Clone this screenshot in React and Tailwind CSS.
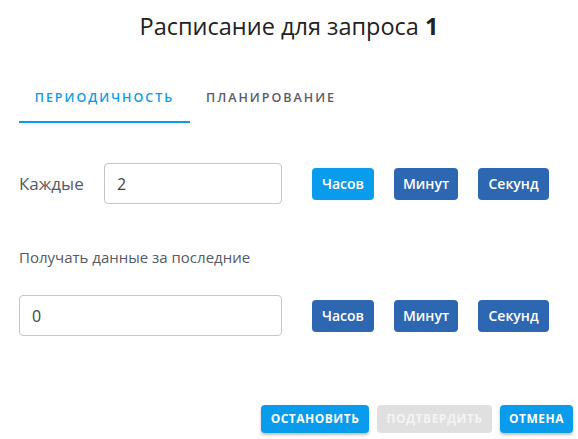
import React, { useState } from 'react';

const units = [
  { label: 'Часов', width: 'w-[62px]' },
  { label: 'Минут', width: 'w-[64px]' },
  { label: 'Секунд', width: 'w-[71px]' }
];

const UnitButtons = ({ value, onChange }) => (
  <div className="flex items-center gap-[20px]">
    {units.map((unit) => (
      <button
        key={unit.label}
        onClick={() => onChange(unit.label)}
        className={`${unit.width} h-[32px] rounded-[4px] text-[14px] font-semibold text-white ${
          value === unit.label ? 'bg-[#0a9cec]' : 'bg-[#2d67b2]'
        }`}
      >
        {unit.label}
      </button>
    ))}
  </div>
);

const App = () => {
  const [tab, setTab] = useState('period');
  const [every, setEvery] = useState('2');
  const [last, setLast] = useState('0');
  const [everyUnit, setEveryUnit] = useState('Часов');
  const [lastUnit, setLastUnit] = useState('');

  return (
    <div
      className="w-[578px] h-[439px] bg-white text-[#222] flex flex-col"
      style={{ fontFamily: '"Open Sans", "Noto Sans", sans-serif' }}
    >
      {/* Title */}
      <h1 className="pt-[11px] text-center text-[23.5px] leading-[30px] font-normal">
        Расписание для запроса <span className="font-bold">1</span>
      </h1>

      {/* Tabs */}
      <div className="mt-[34px] pl-[19px] flex">
        <button
          onClick={() => setTab('period')}
          className={`w-[171px] h-[48px] text-[12.5px] font-semibold tracking-[2px] border-b-2 ${
            tab === 'period' ? 'text-[#0a9be9] border-[#0a9be9]' : 'text-[#5a5a6c] border-transparent'
          }`}
        >
          ПЕРИОДИЧНОСТЬ
        </button>
        <button
          onClick={() => setTab('plan')}
          className={`w-[162px] h-[48px] text-[12.5px] font-semibold tracking-[2px] border-b-2 ${
            tab === 'plan' ? 'text-[#0a9be9] border-[#0a9be9]' : 'text-[#5a5a6c] border-transparent'
          }`}
        >
          ПЛАНИРОВАНИЕ
        </button>
      </div>

      {/* Every */}
      <div className="mt-[40px] pl-[19px] flex items-center">
        <span className="w-[85px] text-[17px] text-[#555a66]">Каждые</span>
        <input
          value={every}
          onChange={(e) => setEvery(e.target.value)}
          className="w-[178px] h-[41px] px-[12px] border-[1.5px] border-[#c4c4cc] rounded-[4px] text-[16px] text-[#444] outline-none"
        />
        <div className="ml-[30px]">
          <UnitButtons value={everyUnit} onChange={setEveryUnit} />
        </div>
      </div>

      {/* Last */}
      <div className="mt-[43px] pl-[19px] text-[15px] text-[#555a66] leading-[20px]">
        Получать данные за последние
      </div>

      <div className="mt-[28px] pl-[19px] flex items-center">
        <input
          value={last}
          onChange={(e) => setLast(e.target.value)}
          className="w-[263px] h-[41px] px-[12px] border-[1.5px] border-[#c4c4cc] rounded-[4px] text-[16px] text-[#444] outline-none"
        />
        <div className="ml-[30px]">
          <UnitButtons value={lastUnit} onChange={setLastUnit} />
        </div>
      </div>

      {/* Footer */}
      <div className="mt-auto mb-[6px] pr-[5px] flex justify-end gap-[8px]">
        <button className="w-[108px] h-[28px] rounded-[4px] bg-[#0a9cec] text-white text-[12px] font-bold tracking-[0.5px] shadow-[0_2px_3px_rgba(0,0,0,0.25)]">
          ОСТАНОВИТЬ
        </button>
        <button
          disabled
          className="w-[115px] h-[28px] rounded-[4px] bg-[#e0e0e0] text-[#f4f4f4] text-[12px] font-bold tracking-[0.5px]"
        >
          ПОДТВЕРДИТЬ
        </button>
        <button className="w-[73px] h-[28px] rounded-[4px] bg-[#0a9cec] text-white text-[12px] font-bold tracking-[0.5px] shadow-[0_2px_3px_rgba(0,0,0,0.25)]">
          ОТМЕНА
        </button>
      </div>
    </div>
  );
};

export default App;
